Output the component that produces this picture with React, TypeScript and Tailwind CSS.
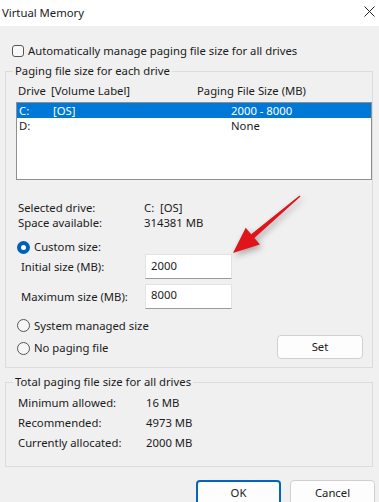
import React from "react";

const font = { fontFamily: '"Noto Sans", "Open Sans", sans-serif' };

function Radio({ checked }: { checked?: boolean }) {
  if (checked) {
    return (
      <span className="w-[13px] h-[13px] rounded-full bg-[#005fb8] flex items-center justify-center shrink-0">
        <span className="w-[5px] h-[5px] rounded-full bg-white" />
      </span>
    );
  }
  return <span className="w-[13px] h-[13px] rounded-full border border-[#555] bg-[#f6f6f6] shrink-0" />;
}

function Group({ title, className, children }: { title: string; className: string; children: React.ReactNode }) {
  return (
    <div className={"relative border border-[#dcdcdc] " + className}>
      <span className="absolute -top-[8px] left-[7px] bg-[#f0f0f0] px-[2px] leading-[14px]">{title}</span>
      {children}
    </div>
  );
}

export default function App() {
  return (
    <div className="relative w-[379px] h-[502px] overflow-hidden bg-[#f0f0f0] text-[11.3px] leading-[14px] text-[#1b1b1b]" style={font}>
      {/* title bar */}
      <div className="h-[26px] bg-white flex items-center justify-between pl-[2px] pr-[4px]">
        <span>Virtual Memory</span>
        <svg width="11" height="11" viewBox="0 0 11 11" className="mb-[4px]">
          <path d="M0.5 0.5 L10.5 10.5 M10.5 0.5 L0.5 10.5" stroke="#222" strokeWidth="1" />
        </svg>
      </div>

      {/* auto manage */}
      <div className="mt-[18px] ml-[12px] flex items-center gap-[4px] h-[13px]">
        <span className="w-[12px] h-[12px] rounded-[3px] border border-[#555] bg-[#f8f8f8]" />
        <span>Automatically manage paging file size for all drives</span>
      </div>

      <Group title="Paging file size for each drive" className="mt-[14px] ml-[5px] w-[368px] h-[297px]">
        <div className="mt-[11px] h-[15px] flex items-center">
          <span className="ml-[12px] w-[33px]">Drive</span>
          <span className="w-[146px]">[Volume Label]</span>
          <span>Paging File Size (MB)</span>
        </div>

        <div className="mt-[4px] ml-[10px] w-[356px] h-[78px] border border-[#8f8f8f] bg-white">
          <div className="h-[15px] bg-[#0078d7] text-white flex items-center">
            <span className="ml-[2px] w-[34px]">C:</span>
            <span className="w-[178px]">[OS]</span>
            <span>2000 - 8000</span>
          </div>
          <div className="h-[15px] flex items-center">
            <span className="ml-[2px] w-[212px]">D:</span>
            <span>None</span>
          </div>
        </div>

        <div className="mt-[20px] h-[15px] flex items-center">
          <span className="ml-[12px] w-[126px]">Selected drive:</span>
          <span>C:&nbsp; [OS]</span>
        </div>
        <div className="h-[15px] flex items-center">
          <span className="ml-[12px] w-[126px]">Space available:</span>
          <span>314381 MB</span>
        </div>

        <div className="mt-[10px] h-[14px] ml-[11px] flex items-center gap-[4px]">
          <Radio checked />
          <span>Custom size:</span>
        </div>
        <div className="h-[25px] flex items-center">
          <span className="ml-[15px] w-[124px]">Initial size (MB):</span>
          <div className="w-[87px] h-[25px] bg-white border border-[#e3e3e3] border-b-[#9a9a9a] flex items-center pl-[5px] pb-[2px]">2000</div>
        </div>
        <div className="mt-[5px] h-[25px] flex items-center">
          <span className="ml-[15px] w-[124px]">Maximum size (MB):</span>
          <div className="w-[87px] h-[25px] bg-white border border-[#e3e3e3] border-b-[#9a9a9a] flex items-center pl-[5px] pb-[4px]">8000</div>
        </div>

        <div className="mt-[9px] h-[15px] ml-[11px] flex items-center gap-[4px]">
          <Radio />
          <span>System managed size</span>
        </div>
        <div className="mt-[2px] h-[24px] flex items-center justify-between pl-[11px] pr-[9px]">
          <div className="flex items-center gap-[4px] mt-[2px]">
            <Radio />
            <span>No paging file</span>
          </div>
          <div className="w-[86px] h-[24px] rounded-[4px] bg-[#fdfdfd] border border-[#d0d0d0] flex items-center justify-center">Set</div>
        </div>
      </Group>

      <Group title="Total paging file size for all drives" className="mt-[14px] ml-[5px] w-[368px] h-[85px]">
        <div className="mt-[10px]">
          {[
            ["Minimum allowed:", "16 MB"],
            ["Recommended:", "4973 MB"],
            ["Currently allocated:", "2000 MB"],
          ].map(([k, v]) => (
            <div key={k} className="h-[20px] flex items-center">
              <span className="ml-[12px] w-[128px]">{k}</span>
              <span>{v}</span>
            </div>
          ))}
        </div>
      </Group>

      <div className="mt-[13px] flex justify-end gap-[9px] pr-[4px]">
        <div className="w-[85px] h-[26px] rounded-[4px] bg-[#fdfdfd] border-2 border-[#0067c0] flex items-center justify-center">OK</div>
        <div className="w-[85px] h-[26px] rounded-[4px] bg-[#fdfdfd] border border-[#d0d0d0] flex items-center justify-center">Cancel</div>
      </div>

      {/* red annotation arrow */}
      <svg className="absolute left-0 top-0 pointer-events-none" width="379" height="502" style={{ filter: "drop-shadow(2px 3px 3px rgba(0,0,0,0.3))" }}>
        <polygon
          points="300.5,196.6 254.4,238.1 259.9,244.6 233,253 245.7,227.8 251.2,234.3 299.5,195.4"
          fill="#e0141b"
        />
      </svg>
    </div>
  );
}
